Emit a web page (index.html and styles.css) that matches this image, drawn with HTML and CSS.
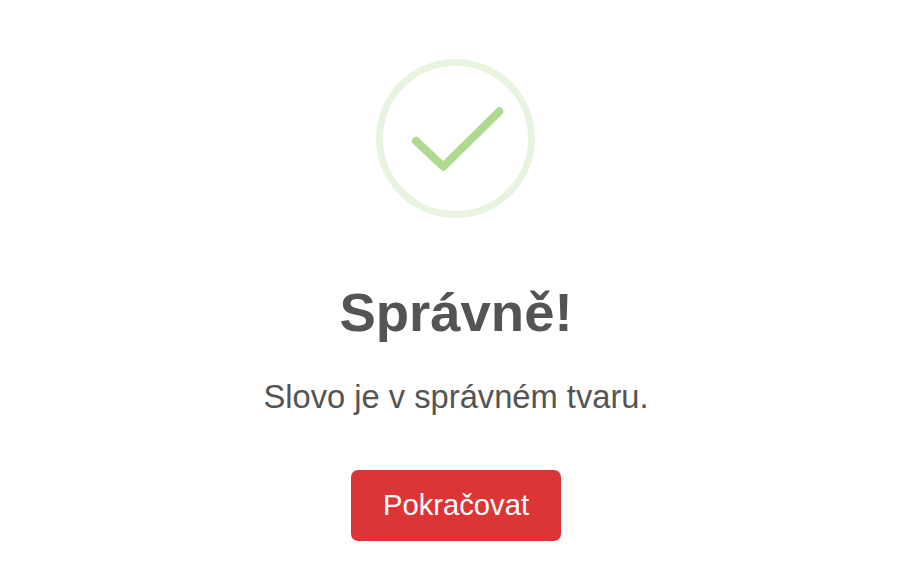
FILE: index.html
```html
<!DOCTYPE html>
<html lang="cs">
<head>
<meta charset="utf-8">
<title>Správně</title>
<link rel="stylesheet" href="styles.css">
</head>
<body>
<main class="modal">
  <div class="icon">
    <svg class="check" width="160" height="160" viewBox="0 0 160 160" fill="none">
      <circle cx="79.500" cy="79.500" r="76" stroke="#e8f4df" stroke-width="7"/>
      <path d="M40 82L67.300 107.700L123.300 52.300" stroke="#aed98f" stroke-width="8" stroke-linecap="round" stroke-linejoin="round"/>
    </svg>
  </div>
  <h1 class="title">Správně!</h1>
  <p class="text">Slovo je v správném tvaru.</p>
  <button class="btn">Pokračovat</button>
</main>
</body>
</html>
```
FILE: styles.css
```css
html, body { margin: 0; padding: 0; background: #fff; }
body { font-family: "Liberation Sans", Arial, sans-serif; }
.modal { width: 910px; height: 570px; display: flex; flex-direction: column; align-items: center; padding: 59px 0 0 2px; box-sizing: border-box; }
.icon { width: 160px; height: 160px; }
.check { display: block; }
.title { margin: 63px 0 0; font-size: 54.5px; line-height: 62px; font-weight: 700; color: #545454; }
.text { margin: 33px 0 0; font-size: 32.7px; line-height: 40px; color: #545454; }
.btn { margin-top: 53px; width: 210px; height: 71px; border: 0; border-radius: 7px; background: #dd3535; color: #fff; font: 29.2px "Liberation Sans", Arial, sans-serif; }
```
